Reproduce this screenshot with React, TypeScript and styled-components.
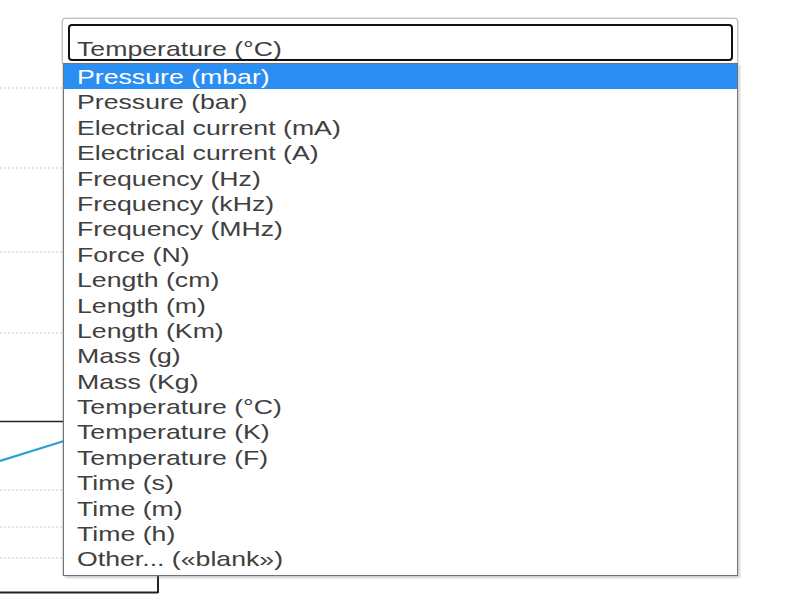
import React, { useState } from "react";
import styled, { createGlobalStyle } from "styled-components";

const units = [
  "Pressure (mbar)",
  "Pressure (bar)",
  "Electrical current (mA)",
  "Electrical current (A)",
  "Frequency (Hz)",
  "Frequency (kHz)",
  "Frequency (MHz)",
  "Force (N)",
  "Length (cm)",
  "Length (m)",
  "Length (Km)",
  "Mass (g)",
  "Mass (Kg)",
  "Temperature (°C)",
  "Temperature (K)",
  "Temperature (F)",
  "Time (s)",
  "Time (m)",
  "Time (h)",
  "Other... («blank»)",
];

const gridLines = [88, 168, 252, 333, 490, 527, 558];

const App: React.FC = () => {
  const [value] = useState("Temperature (°C)");
  const [active] = useState(0);

  return (
    <Page>
      <GlobalStyle />
      <ChartLayer width={800} height={597} viewBox="0 0 800 597">
        {gridLines.map((y) => (
          <line key={y} x1={0} y1={y} x2={70} y2={y} stroke="#c9c9c9" strokeDasharray="2 2" />
        ))}
        <line x1={0} y1={421.5} x2={64} y2={421.5} stroke="#222" strokeWidth={1.6} />
        <line x1={0} y1={461} x2={64} y2={441} stroke="#2a9fd6" strokeWidth={2.2} />
        <line x1={0} y1={592.5} x2={158} y2={592.5} stroke="#222" strokeWidth={2} />
        <line x1={158} y1={574} x2={158} y2={593} stroke="#222" strokeWidth={2} />
      </ChartLayer>

      <SelectFrame>
        <SelectBox>
          <Label>{value}</Label>
        </SelectBox>
        <OptionList>
          {units.map((unit, i) => (
            <OptionRow key={unit} $active={i === active}>
              <Label>{unit}</Label>
            </OptionRow>
          ))}
        </OptionList>
      </SelectFrame>
    </Page>
  );
};

const GlobalStyle = createGlobalStyle`
  html, body {
    margin: 0;
    padding: 0;
    background: #ffffff;
  }
  body {
    font-family: "Liberation Sans", Arial, sans-serif;
  }
`;

const Page = styled.div`
  position: relative;
  width: 800px;
  height: 597px;
  overflow: hidden;
  background: #ffffff;
  padding: 18px 0 0 62px;
  box-sizing: border-box;
`;

const ChartLayer = styled.svg`
  position: absolute;
  left: 0;
  top: 0;
  display: block;
`;

const SelectFrame = styled.div`
  position: relative;
  width: 676px;
  box-sizing: border-box;
  padding: 5px 4px 2px 5px;
  border: 1px solid #b7c0cc;
  border-bottom: none;
  border-radius: 4px 4px 0 0;
  background: #ffffff;
  box-shadow: 0 0 1px 1px #e2e6ec;
`;

const SelectBox = styled.div`
  box-sizing: content-box;
  border: 2px solid #111111;
  border-radius: 4px;
  padding: 10px 0 0 7px;
  height: 23px;
  overflow: hidden;
  background: #ffffff;
  color: #404040;
  font-size: 21px;
  line-height: 25px;
`;

const Label = styled.span`
  display: inline-block;
  white-space: nowrap;
  transform: scaleX(1.27);
  transform-origin: left center;
`;

const OptionList = styled.ul`
  position: absolute;
  left: 0;
  top: 100%;
  width: 675px;
  box-sizing: border-box;
  margin: 0;
  padding: 0 0 3px 0;
  list-style: none;
  background: #ffffff;
  border: 1px solid #6f7380;
  box-shadow: 2px 2px 2px rgba(120, 120, 130, 0.35), -1px 0 1px rgba(120, 120, 130, 0.25);
  font-size: 21px;
  line-height: 25.4px;
`;

const OptionRow = styled.li<{ $active: boolean }>`
  padding-left: 13px;
  height: 25.4px;
  color: ${(p) => (p.$active ? "#ffffff" : "#404040")};
  background: ${(p) => (p.$active ? "#2b8ef3" : "transparent")};
`;

export default App;
